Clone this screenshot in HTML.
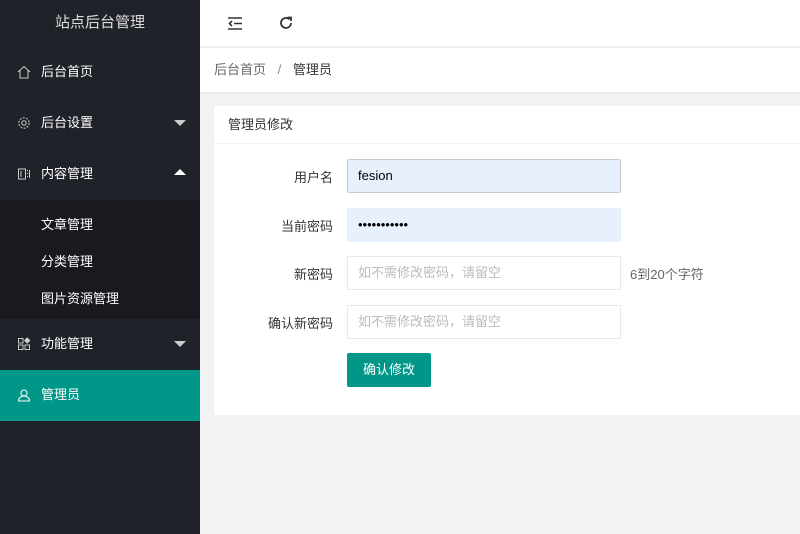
<!DOCTYPE html>
<html><head><meta charset="utf-8"><style>
*{margin:0;padding:0;box-sizing:border-box}
body{width:800px;height:534px;overflow:hidden;font-family:"Liberation Sans","Noto Sans CJK SC",sans-serif;font-size:13px;background:#f2f2f2;position:relative}
.side{position:absolute;left:0;top:0;width:200px;height:534px;background:#20222a}
.title{height:47px;line-height:46px;text-align:center;color:#ddd;font-size:15px}
.item{position:absolute;left:0;width:200px;height:50px;line-height:50px;color:#fff;padding-left:41px}
.item svg{position:absolute;left:17px;top:18px}
.arr{position:absolute;right:14px;top:22px;width:0;height:0;border-left:6px solid transparent;border-right:6px solid transparent}
.sub{position:absolute;top:200px;left:0;width:200px;height:119px;background:#191a20}
.sub div{position:absolute;left:41px;color:#fff}
.hdr{position:absolute;left:200px;top:0;right:0;height:47px;background:#fff;border-bottom:1px solid #eee}
.bc{position:absolute;left:200px;top:48px;right:0;height:44px;background:#fff;line-height:44px;padding-left:14px;color:#666;box-shadow:0 1px 2px rgba(0,0,0,.05)}
.card{position:absolute;left:214px;top:106px;width:600px;height:309px;background:#fff;border-radius:2px}
.ch{height:38px;line-height:38px;padding-left:14px;border-bottom:1px solid #f4f4f4;color:#333}
.lbl{position:absolute;width:119px;text-align:right;color:#333;left:0}
.in{position:absolute;left:133px;width:274px;height:34px;border:1px solid #e6e6e6;border-radius:2px;padding-left:10px;line-height:32px;color:#bbb}
.btn{position:absolute;left:133px;top:247px;width:84px;height:34px;background:#009688;color:#fff;text-align:center;line-height:34px;border-radius:2px}
</style></head><body>
<div class="side">
<div class="title">站点后台管理</div>
<div class="item" style="top:47px"><svg width="14" height="14" viewBox="0 0 14 14" fill="none" stroke="#ccc" stroke-width="1"><path d="M1 7L7 1.5 13 7M3 5.5V13h8V5.5"/></svg>后台首页</div>
<div class="item" style="top:98px"><svg width="14" height="14" viewBox="0 0 14 14" fill="none" stroke="#ccc" stroke-width="1"><circle cx="7" cy="7" r="2.2"/><circle cx="7" cy="7" r="5.2" stroke-dasharray="2 1.3"/></svg>后台设置<span class="arr" style="border-top:6px solid #ccc"></span></div>
<div class="item" style="top:149px"><svg width="14" height="14" viewBox="0 0 14 14" fill="none" stroke="#ccc" stroke-width="1"><rect x="1.5" y="2" width="7" height="10"/><path d="M4 4v6M10.5 3v1M10.5 6v1M10.5 9v1M12.5 3v8"/></svg>内容管理<span class="arr" style="top:20px;border-bottom:6px solid #fff"></span></div>
<div class="sub"><div style="top:14px">文章管理</div><div style="top:51px">分类管理</div><div style="top:88px">图片资源管理</div></div>
<div class="item" style="top:319px"><svg width="14" height="14" viewBox="0 0 14 14" fill="none" stroke="#ccc" stroke-width="1"><rect x="1.5" y="1.5" width="4.5" height="4.5"/><rect x="1.5" y="8" width="4.5" height="4.5"/><rect x="8" y="8" width="4.5" height="4.5"/><path d="M10.2 1l2.5 2.5-2.5 2.5-2.5-2.5z" fill="#ccc"/></svg>功能管理<span class="arr" style="border-top:6px solid #ccc"></span></div>
<div class="item" style="top:370px;height:51px;background:#009688"><svg width="14" height="14" viewBox="0 0 14 14" fill="none" stroke="#fff" stroke-width="1"><circle cx="7" cy="5" r="3"/><path d="M1.5 13c0-3 2.5-5 5.5-5s5.5 2 5.5 5z"/></svg>管理员</div>
</div>
<div class="hdr">
<svg style="position:absolute;left:28px;top:17px" width="14" height="13" viewBox="0 0 14 13" stroke="#333" stroke-width="1.6" fill="none"><path d="M0 1h14M6 6.5h8M0 12h14M4 4L1.5 6.5 4 9"/></svg>
<svg style="position:absolute;left:79px;top:16px" width="14" height="14" viewBox="0 0 14 14" stroke="#333" stroke-width="1.8" fill="none"><path d="M12 7A5 5 0 1 1 10.5 3.4"/><path d="M8.5 1.5h3.5V5" /></svg>
</div>
<div class="bc">后台首页 <span style="margin:0 8px;color:#888">/</span> <span style="color:#333">管理员</span></div>
<div class="card">
<div class="ch">管理员修改</div>
<div class="lbl" style="top:61px">用户名</div>
<div class="in" style="top:53px;background:#e8f0fe;border-color:#c8c8c8;color:#000">fesion</div>
<div class="lbl" style="top:110px">当前密码</div>
<div class="in" style="top:102px;background:#e8f0fe;border-color:#e8f0fe;color:#000">•••••••••••</div>
<div class="lbl" style="top:158px">新密码</div>
<div class="in" style="top:150px">如不需修改密码，请留空</div>
<div style="position:absolute;left:416px;top:158px;color:#666">6到20个字符</div>
<div class="lbl" style="top:207px">确认新密码</div>
<div class="in" style="top:199px">如不需修改密码，请留空</div>
<div class="btn">确认修改</div>
</div>
</body></html>
